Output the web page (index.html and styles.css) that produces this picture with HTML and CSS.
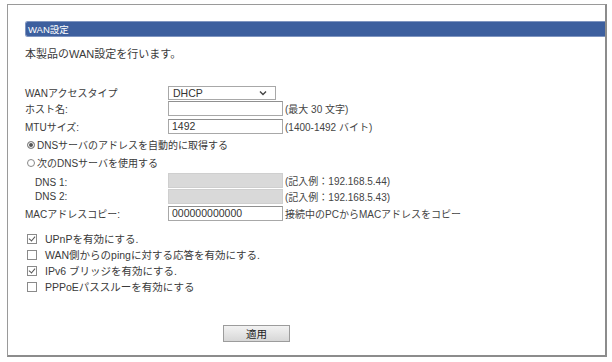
FILE: index.html
```html
<!DOCTYPE html>
<html lang="ja">
<head>
    <meta charset="UTF-8">
    <title>WAN設定</title>
    <link rel="stylesheet" href="styles.css">
</head>
<body>
    <div class="frame">
        <div class="title-bar">WAN設定</div>
        <p class="intro">本製品のWAN設定を行います。</p>

        <table class="form-table">
            <tr class="select-row">
                <td class="label">WANアクセスタイプ</td>
                <td colspan="2">
                    <div class="select-box">
                        <span>DHCP</span>
                        <svg class="chevron" width="8" height="6" viewBox="0 0 8 6"><path d="M1 1.5 L4 4.5 L7 1.5" fill="none" stroke="#444" stroke-width="1.4"/></svg>
                    </div>
                </td>
            </tr>
            <tr>
                <td class="label">ホスト名:</td>
                <td class="field"><div class="text-box"></div></td>
                <td class="note">(最大 30 文字)</td>
            </tr>
            <tr class="mtu-row">
                <td class="label">MTUサイズ:</td>
                <td class="field"><div class="text-box">1492</div></td>
                <td class="note">(1400-1492 バイト)</td>
            </tr>
            <tr class="radio-row">
                <td colspan="3"><span class="radio on"></span>DNSサーバのアドレスを自動的に取得する</td>
            </tr>
            <tr class="radio-row">
                <td colspan="3"><span class="radio"></span>次のDNSサーバを使用する</td>
            </tr>
            <tr class="dns-row">
                <td class="label indent">DNS 1:</td>
                <td class="field"><div class="text-box disabled"></div></td>
                <td class="note">(記入例：192.168.5.44)</td>
            </tr>
            <tr>
                <td class="label indent">DNS 2:</td>
                <td class="field"><div class="text-box disabled"></div></td>
                <td class="note">(記入例：192.168.5.43)</td>
            </tr>
            <tr class="mac-row">
                <td class="label">MACアドレスコピー:</td>
                <td class="field"><div class="text-box">000000000000</div></td>
                <td class="note">接続中のPCからMACアドレスをコピー</td>
            </tr>
        </table>

        <ul class="checks">
            <li><span class="check on"></span>UPnPを有効にする.</li>
            <li><span class="check"></span>WAN側からのpingに対する応答を有効にする.</li>
            <li><span class="check on"></span>IPv6 ブリッジを有効にする.</li>
            <li><span class="check"></span>PPPoEパススルーを有効にする</li>
        </ul>

        <div class="actions">
            <button class="apply-btn">適用</button>
        </div>
    </div>
</body>
</html>
```

FILE: styles.css
```css
body {
    margin: 0;
    background-color: #ffffff;
    font-family: "Liberation Sans", "Noto Sans CJK JP", sans-serif;
    font-size: 10px;
    color: #3a3a3a;
}
.frame {
    margin: 4px 0 0 7px;
    width: 600px;
    height: 353px;
    border: 1px solid #9a9a9a;
    border-right: 2px solid #8c8c8c;
    border-bottom: 2px solid #8c8c8c;
    padding: 16px 0 0 17px;
    box-sizing: border-box;
}
.title-bar {
    height: 16px;
    line-height: 15px;
    background-color: #3d5f9e;
    border: 1px solid #7f95c0;
    border-right: none;
    border-radius: 3px 0 0 3px;
    color: #ffffff;
    padding-left: 2px;
    font-size: 9.5px;
    box-sizing: border-box;
}
.intro {
    margin: 10px 0 0 0;
    line-height: 14px;
    font-size: 11px;
}
.form-table {
    border-collapse: collapse;
    margin-top: 24px;
}
.form-table td {
    padding: 0;
    height: 17px;
    white-space: nowrap;
    vertical-align: middle;
}
.form-table .label {
    width: 143px;
}
.form-table .indent {
    width: 133px;
    padding-left: 10px;
}
.form-table .select-row td {
    height: 15px;
}
.form-table .mtu-row td {
    height: 18px;
}
.form-table .mac-row td {
    height: 16px;
}
.form-table .dns-row td {
    height: 17px;
    vertical-align: bottom;
}
.field {
    width: 115px;
}
.form-table .note {
    padding-left: 2px;
    color: #444444;
}
.select-box {
    width: 108px;
    height: 14px;
    border: 1px solid #a8a8a8;
    box-sizing: border-box;
    display: flex;
    align-items: center;
    justify-content: space-between;
    padding: 0 8px 0 4px;
    font-size: 10.5px;
    color: #333333;
}
.text-box {
    width: 115px;
    height: 15px;
    border: 1px solid #a8a8a8;
    border-top-color: #909090;
    box-sizing: border-box;
    line-height: 13px;
    padding-left: 3px;
    font-size: 10.5px;
    color: #333333;
}
.text-box.disabled {
    background-color: #d9d9d9;
    border-color: #cfcfcf;
}
.form-table .radio-row td {
    height: 18px;
    padding-left: 2px;
}
.radio {
    display: inline-block;
    width: 6px;
    height: 6px;
    border: 1px solid #888888;
    border-radius: 50%;
    margin-right: 2px;
    vertical-align: 0;
}
.radio.on {
    background-color: #555555;
    box-shadow: inset 0 0 0 1px #ffffff;
}
.checks {
    list-style: none;
    margin: 10px 0 0 2px;
    padding: 0;
    font-size: 10.5px;
}
.checks li {
    height: 16px;
    line-height: 16px;
    display: flex;
    align-items: center;
}
.check {
    width: 8px;
    height: 8px;
    border: 1px solid #8a8a8a;
    margin-right: 8px;
    position: relative;
}
.check.on::after {
    content: "";
    position: absolute;
    left: 2px;
    top: 0;
    width: 3px;
    height: 5px;
    border-right: 1.5px solid #555555;
    border-bottom: 1.5px solid #555555;
    transform: rotate(40deg);
}
.actions {
    margin-top: 30px;
    padding-left: 198px;
}
.apply-btn {
    width: 67px;
    height: 17px;
    padding: 0;
    border: 1px solid #9c9c9c;
    background: linear-gradient(#f2f2f2, #d7d7d7);
    font-family: "Liberation Sans", "Noto Sans CJK JP", sans-serif;
    font-size: 10.5px;
    color: #222222;
}
```
